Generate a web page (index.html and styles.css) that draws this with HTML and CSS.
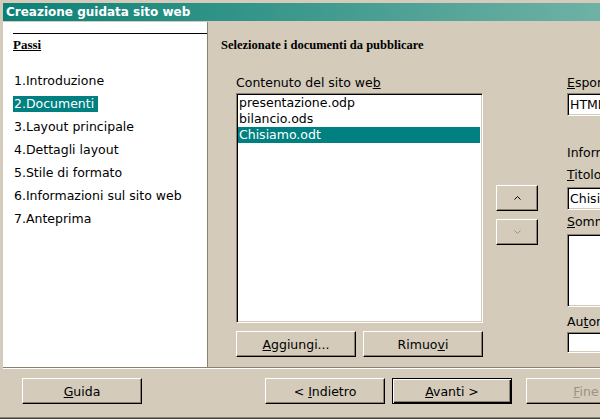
FILE: index.html
```html
<!DOCTYPE html>
<html lang="it">
<head>
<meta charset="utf-8">
<title>Creazione guidata sito web</title>
<link rel="stylesheet" href="styles.css">
</head>
<body>
<div class="window">
  <div class="titlebar">Creazione guidata sito web</div>
  <div class="main">
    <div class="steps-panel">
      <div class="steps-rule"></div>
      <div class="steps-title">Passi</div>
      <ul class="steps">
        <li class="step">1.Introduzione</li>
        <li class="step is-current">2.Documenti</li>
        <li class="step">3.Layout principale</li>
        <li class="step">4.Dettagli layout</li>
        <li class="step">5.Stile di formato</li>
        <li class="step">6.Informazioni sul sito web</li>
        <li class="step">7.Anteprima</li>
      </ul>
    </div>
    <div class="page">
      <h1 class="page-title">Selezionate i documenti da pubblicare</h1>
      <div class="columns">
        <div class="doc-col">
          <div class="label">Contenuto del sito we<u>b</u></div>
          <div class="listbox">
            <div class="item">presentazione.odp</div>
            <div class="item">bilancio.ods</div>
            <div class="item is-selected">Chisiamo.odt</div>
          </div>
          <div class="doc-buttons">
            <button class="btn"><span><u>A</u>ggiungi...</span></button>
            <button class="btn"><span>Rimuo<u>v</u>i</span></button>
          </div>
        </div>
        <div class="move-col">
          <button class="btn btn-small"><svg class="arrow" width="7" height="4" viewBox="0 0 7 4"><path d="M0.5 3.5 L3.5 0.5 L6.5 3.5" fill="none" stroke="currentColor" stroke-width="1"/></svg></button>
          <button class="btn btn-small is-disabled"><svg class="arrow" width="7" height="4" viewBox="0 0 7 4"><path d="M0.5 0.5 L3.5 3.5 L6.5 0.5" fill="none" stroke="currentColor" stroke-width="1"/></svg></button>
        </div>
        <div class="info-col">
          <div class="label"><u>E</u>sporta nel formato</div>
          <div class="field field-first">HTML</div>
          <div class="label info-heading">Informazioni sul documento</div>
          <div class="label label-title"><u>T</u>itolo</div>
          <div class="field field-title">Chisiamo</div>
          <div class="label label-summary"><u>S</u>ommario</div>
          <div class="field field-area"></div>
          <div class="label label-author">Au<u>t</u>ore</div>
          <div class="field field-author"></div>
        </div>
      </div>
    </div>
  </div>
  <div class="separator"></div>
  <div class="buttonbar">
    <button class="btn"><span><u>G</u>uida</span></button>
    <button class="btn btn-back"><span>&lt; <u>I</u>ndietro</span></button>
    <button class="btn btn-default"><span><u>A</u>vanti &gt;</span></button>
    <button class="btn btn-finish is-disabled"><span><u>F</u>ine</span></button>
  </div>
</div>
</body>
</html>
```
FILE: styles.css
```css
* { box-sizing: border-box; }

html, body {
  margin: 0;
  width: 600px;
  height: 419px;
  overflow: hidden;
  background: #d4cbba;
}

body {
  font-family: "DejaVu Sans", sans-serif;
  font-size: 12.5px;
  color: #000;
}

.window {
  width: 720px;
  height: 419px;
  padding: 3px 0 0 3px;
  display: flex;
  flex-direction: column;
  border-bottom: 1px solid #404040;
  box-shadow: inset 0 -1px #8a8171;
}

.titlebar {
  height: 18px;
  margin-bottom: 1px;
  padding-left: 3px;
  background: linear-gradient(to right, #0b8176 0px, #6fb1a5 597px, #80bab0 717px);
  color: #fff;
  font-weight: bold;
  font-size: 12px;
  line-height: 18px;
  white-space: nowrap;
}

.main {
  display: flex;
  height: 345px;
}

.steps-panel {
  width: 205px;
  flex: none;
  background: #fff;
  border-right: 1px solid #8a8171;
  padding: 11px 0 0 10px;
}

.steps-rule {
  height: 1px;
  background: #000;
}

.steps-title {
  margin-top: 3px;
  font: bold 13px/16px "Liberation Serif", serif;
  text-decoration: underline;
}

.steps {
  list-style: none;
  margin: 20px 0 0;
  padding: 0;
  display: flex;
  flex-direction: column;
  align-items: flex-start;
  gap: 7px;
}

.step {
  height: 16px;
  line-height: 16px;
  padding: 0 4px 0 1px;
  white-space: nowrap;
}

.step.is-current {
  background: #008080;
  color: #fff;
}

.page {
  flex: 1;
  padding: 15px 0 0 13px;
}

.page-title {
  margin: 0;
  font: bold 12.5px/16px "Liberation Serif", serif;
}

.columns {
  display: flex;
  margin: 22px 0 0 15px;
}

.doc-col {
  width: 247px;
  flex: none;
  display: flex;
  flex-direction: column;
}

.label {
  height: 16px;
  line-height: 16px;
  white-space: nowrap;
}

.listbox {
  margin-top: 2px;
  height: 230px;
  background: #fff;
  border: 1px solid;
  border-color: #8a8171 #fff #fff #8a8171;
  box-shadow: inset 1px 1px #000, inset -1px -1px #d4cbba;
  padding: 1px 2px 1px 1px;
}

.item {
  height: 16px;
  line-height: 16px;
  padding-left: 1px;
  white-space: nowrap;
}

.item.is-selected {
  background: #008080;
  color: #fff;
}

.doc-buttons {
  margin-top: 8px;
  display: flex;
  gap: 7px;
}

.btn {
  width: 120px;
  height: 26px;
  flex: none;
  padding: 0;
  font: 12.5px "DejaVu Sans", sans-serif;
  color: #000;
  background: #d4cbba;
  border: 1px solid;
  border-color: #fff #000 #000 #fff;
  box-shadow: inset -1px -1px #8a8171;
  display: flex;
  align-items: center;
  justify-content: center;
  white-space: pre;
}

.btn.is-disabled {
  color: #9c9384;
}

.btn-small {
  width: 42px;
}

.arrow {
  display: block;
}

.move-col {
  margin-left: 13px;
  padding-top: 110px;
  display: flex;
  flex-direction: column;
  gap: 8px;
}

.info-col {
  margin-left: 29px;
  width: 180px;
  flex: none;
  display: flex;
  flex-direction: column;
}

.field {
  height: 23px;
  background: #fff;
  border: 1px solid;
  border-color: #8a8171 #fff #fff #8a8171;
  box-shadow: inset 1px 1px #000, inset -1px -1px #d4cbba;
  padding-left: 2px;
  display: flex;
  align-items: center;
  white-space: nowrap;
}

.field-first { margin-top: 2px; }
.info-heading { margin-top: 29px; }
.label-title { margin-top: 6px; }
.field-title { margin-top: 4px; }
.label-summary { margin-top: 4px; }
.field-area { margin-top: 4px; height: 73px; }
.label-author { margin-top: 7px; }
.field-author { margin-top: 2px; height: 21px; }

.separator {
  height: 2px;
  border-top: 1px solid #8a8171;
  border-bottom: 1px solid #fff;
}

.buttonbar {
  display: flex;
  padding: 9px 0 0 19px;
}

.btn-back { margin-left: 123px; }

.btn-default {
  margin-left: 7px;
  border: 1px solid #000;
  box-shadow: inset 1px 1px #fff, inset -1px -1px #000, inset -2px -2px #8a8171;
}

.btn-finish { margin-left: 14px; }
```
